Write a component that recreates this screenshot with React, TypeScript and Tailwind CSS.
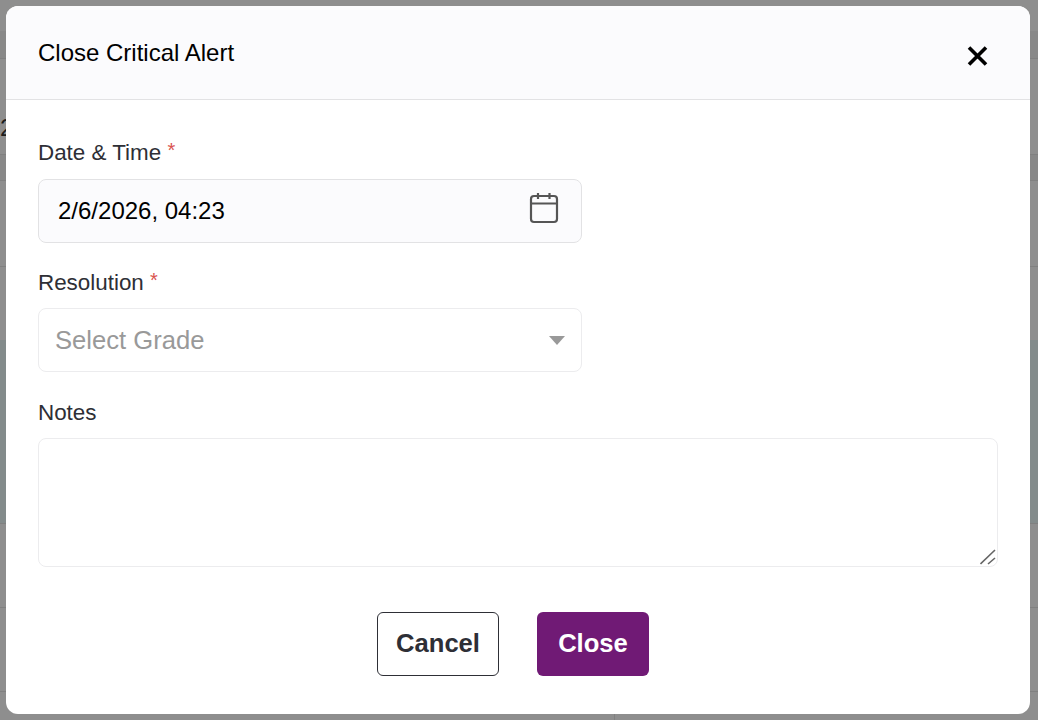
const App = () => {
  return (
    <div className="relative h-[720px] overflow-hidden bg-[#8e8e8e] font-['Liberation_Sans',Arial,sans-serif]">
      {/* page behind the overlay */}
      <div className="flex flex-col">
        <div className="h-[31px]"></div>
        <div className="h-[28px] border-b border-[#808080] bg-[#888888]"></div>
        <div className="h-[95px]"></div>
        <div className="h-[27px] border-y border-[#808080] bg-[#888888]"></div>
        <div className="h-[86px] border-b border-[#808080]"></div>
        <div className="h-[73px]"></div>
        <div className="h-[183px] bg-[#838b8b]"></div>
        <div className="h-[85px] border-y border-[#808080]"></div>
        <div className="h-[84px] border-b border-[#808080]"></div>
      </div>
      <span className="absolute left-0 top-[110px] text-[24px] text-[#1c1c1c]">2</span>
      <div className="absolute bottom-0 left-[614px] h-[6px] w-px bg-[#808080]"></div>

      <div className="absolute left-[6px] top-[6px] flex h-[708px] w-[1024px] flex-col overflow-hidden rounded-[12px] bg-white">
        <div className="flex h-[94px] items-center justify-between border-b border-[#e2e2e4] bg-[#fbfbfd] pl-8 pr-[42px]">
          <h1 className="text-[24px] text-black">Close Critical Alert</h1>
          <button className="mt-[6px]">
            <svg width="21" height="20" viewBox="0 0 21 20">
              <path d="M2 1.5 L19 18.5 M19 1.5 L2 18.5" stroke="#000" strokeWidth="3.6" fill="none" />
            </svg>
          </button>
        </div>

        <div className="flex flex-1 flex-col px-8">
          <label className="mt-[39px] h-[27px] text-[22.4px] leading-[27px] text-[#2e2f36]">
            Date &amp; Time <span className="align-[3px] text-[20px] leading-none text-[#d9534f]">*</span>
          </label>
          <div className="mt-[13px] flex h-[64px] w-[544px] items-center justify-between rounded-[8px] border border-[#e2e2e4] bg-[#fbfbfd] pl-[19px] pr-[22px]">
            <span className="text-[24px] text-black">2/6/2026, 04:23</span>
            <svg width="30" height="32" viewBox="0 0 30 32" className="mb-[6px]" fill="none" stroke="#555" strokeWidth="2.2">
              <rect x="2" y="4" width="26" height="26" rx="3" />
              <path d="M2 11.5 H28 M9 1 V7 M20.5 1 V7" />
            </svg>
          </div>

          <label className="mt-[26px] h-[27px] text-[22.4px] leading-[27px] text-[#2e2f36]">
            Resolution <span className="align-[3px] text-[20px] leading-none text-[#d9534f]">*</span>
          </label>
          <div className="mt-[12px] flex h-[64px] w-[544px] items-center justify-between rounded-[8px] border border-[#ececee] bg-white pl-[16px] pr-[16px]">
            <span className="text-[25.6px] text-[#999999]">Select Grade</span>
            <svg width="16" height="9" viewBox="0 0 16 9">
              <path d="M0 0 H16 L8 9 Z" fill="#999" />
            </svg>
          </div>

          <label className="mt-[27px] h-[27px] text-[22.4px] leading-[27px] text-[#2e2f36]">Notes</label>
          <div className="relative mt-[12px] h-[129px] w-[960px] rounded-[8px] border border-[#ececee] bg-white">
            <svg width="16" height="16" viewBox="0 0 16 16" className="absolute bottom-[1px] right-[1px]" fill="none" stroke="#666" strokeWidth="1.6">
              <path d="M0.5 15 L15 1 M8 15 L15 9" />
            </svg>
          </div>

          <div className="mt-[45px] flex justify-center gap-[38px] pr-[10px]">
            <button className="h-[64px] w-[122px] rounded-[6px] border border-[#2e2f36] bg-white pb-[2px] text-[25.6px] font-bold text-[#2e2f36]">
              Cancel
            </button>
            <button className="h-[64px] w-[112px] rounded-[6px] bg-[#701a75] pb-[2px] text-[25.6px] font-bold text-white">
              Close
            </button>
          </div>
        </div>
      </div>
    </div>
  );
};

export default App;
